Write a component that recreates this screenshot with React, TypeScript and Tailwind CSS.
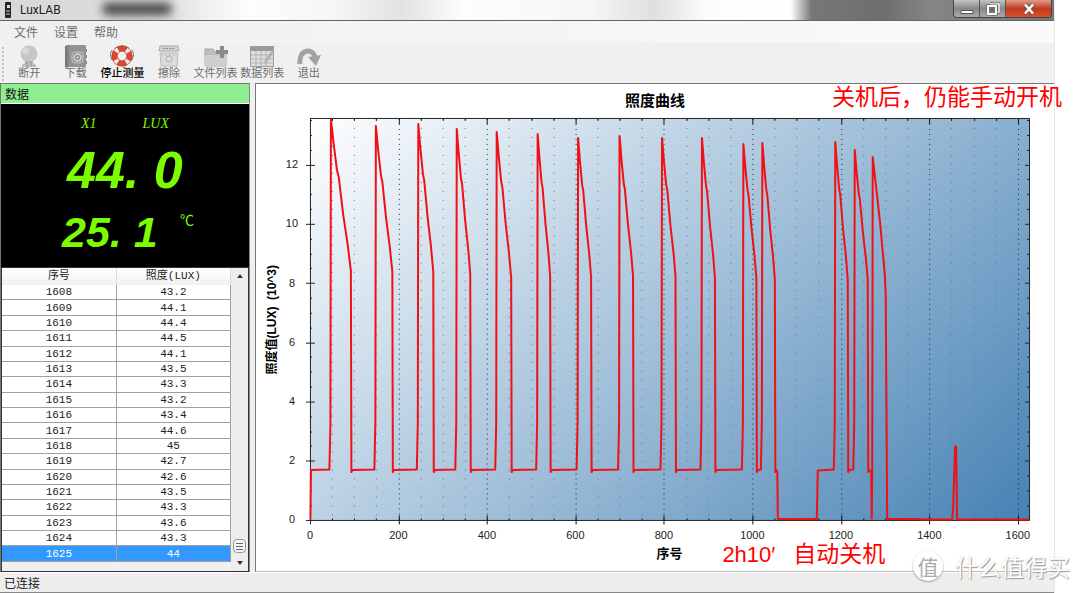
import type { ReactNode } from "react";

type Reading = { index: number; lux: string };

type ToolItem = { label: string; icon: ReactNode; active?: boolean };

// rise x, peak y, fall x, shoulder y
type Pulse = [number, number, number, number];

const MENUS = ["文件", "设置", "帮助"];

const LUX_VALUES = [
  "43.2", "44.1", "44.4", "44.5", "44.1", "43.5", "43.3", "43.2", "43.4",
  "44.6", "45", "42.7", "42.6", "43.5", "43.3", "43.6", "43.3", "44",
];

const READINGS: Reading[] = LUX_VALUES.map((lux, i) => ({ index: 1608 + i, lux }));

const SELECTED_INDEX = 1625;

const PLOT = { left: 54, right: 774, top: 35, bottom: 437 };
const X_STEP = 22.15;
const Y_STEP = 14.83;
const BASELINE = 386.5;

const FIRST_RUN: Pulse[] = [
  [75, 35, 95.5, 187],
  [120, 42, 137, 188],
  [162.5, 40, 178, 188],
  [201, 45, 215, 190],
  [241, 48, 256, 194],
  [282, 50, 295, 192],
  [322.5, 54, 336, 193],
  [364, 52, 378, 192],
  [406.5, 54, 420.5, 192],
  [446.5, 54, 460, 194],
  [488, 60, 501.5, 194],
  [507, 59, 520, 196],
];

const SECOND_RUN: Pulse[] = [
  [580, 58, 593, 196],
  [599.5, 66, 613, 196],
];

function pulsePath([rise, peak, fall, shoulder]: Pulse) {
  const w = fall - rise;
  const h = shoulder - peak;
  return [
    `L${rise - 1.5} ${BASELINE - 0.5}`,
    `L${rise - 0.5} 340`,
    `L${rise} ${peak}`,
    `L${rise + w * 0.14} ${peak + h * 0.17}`,
    `L${rise + w * 0.3} ${peak + h * 0.34}`,
    `L${rise + w * 0.38} ${peak + h * 0.38}`,
    `L${rise + w * 0.6} ${peak + h * 0.63}`,
    `L${rise + w * 0.82} ${peak + h * 0.83}`,
    `L${fall - 0.5} ${shoulder}`,
    `L${fall} ${BASELINE + 2}`,
    `L${fall + 1} ${BASELINE}`,
  ].join(" ");
}

const CURVE = [
  "M54.5 436",
  `L55 ${BASELINE}`,
  ...FIRST_RUN.map(pulsePath),
  "L522 388 L522.5 435.5 H561.5 L562.5 387",
  ...SECOND_RUN.map(pulsePath),
  "L616 388 L616.5 435 L617 386 L617.5 73 L620 95 L625 140 L629.5 190 L630.5 210 L632 435.5",
  "H660 L670 436 H697 L698 425 L700 363 L701 363 L702 436 H774",
].join(" ");

const TOOLS: ToolItem[] = [
  {
    label: "断开",
    icon: (
      <svg viewBox="0 0 24 24" className="h-6 w-6">
        <circle cx="12" cy="9" r="8.5" fill="#c6c6c6" />
        <circle cx="9" cy="6" r="3.5" fill="#d8d8d8" />
        <path d="M8 16h8v4H8z" fill="#b4b4b4" />
        <path d="M5 20c2-3 12-3 14 0v2H5z" fill="#bdbdbd" />
        <path d="M10 17v5M14 17v5" stroke="#999" />
      </svg>
    ),
  },
  {
    label: "下载",
    icon: (
      <svg viewBox="0 0 24 24" className="h-6 w-6">
        <path d="M1 1l3-1v23l-3-1z" fill="#777" />
        <rect x="3" y="0" width="19" height="22" rx="1" fill="#939393" />
        <path d="M4 0v22" stroke="#777" />
        <path d="M22 4h1v3h-1zM22 10h1v3h-1zM22 16h1v3h-1z" fill="#888" />
        <rect x="8" y="7" width="11" height="11" rx="3" fill="none" stroke="#c6c6c6" />
        <circle cx="13.500" cy="12.500" r="3.500" fill="none" stroke="#d4d4d4" strokeWidth="1.500" />
        <circle cx="13.500" cy="12.500" r="1" fill="#ddd" />
      </svg>
    ),
  },
  {
    label: "停止测量",
    active: true,
    icon: (
      <svg viewBox="0 0 24 24" className="h-6 w-6">
        <path d="M5 3Q12-1 19 3M2 5L0 9l2 6M22 5l2 4-2 6" fill="none" stroke="#777" />
        <circle cx="12" cy="11" r="7.500" fill="none" stroke="#e2452a" strokeWidth="5.500" />
        <circle
          cx="12"
          cy="11"
          r="7.500"
          fill="none"
          stroke="#e8edf3"
          strokeWidth="5.500"
          strokeDasharray="3.400 8.380"
          strokeDashoffset="-4.200"
        />
        <circle cx="12" cy="11" r="10.200" fill="none" stroke="#a9341f" strokeWidth="0.600" />
        <circle cx="12" cy="11" r="4.800" fill="none" stroke="#a9341f" strokeWidth="0.600" />
      </svg>
    ),
  },
  {
    label: "擦除",
    icon: (
      <svg viewBox="0 0 24 24" className="h-6 w-6">
        <path d="M3 1h18l1 5H2z" fill="#d3d3d3" stroke="#aaa" />
        <path d="M6 3.500h12" stroke="#888" strokeDasharray="2 1" />
        <path d="M3 8h18l-1 13H4z" fill="#dcdcdc" stroke="#bcbcbc" />
        <circle cx="12" cy="14" r="3" fill="none" stroke="#b0b0b0" />
        <path d="M4 10h16" stroke="#b9b9b9" strokeDasharray="2 2" />
      </svg>
    ),
  },
  {
    label: "文件列表",
    icon: (
      <svg viewBox="0 0 24 24" className="h-6 w-6">
        <path d="M1 4h8l2 3h11v14H1z" fill="#bdbdbd" stroke="#a6a6a6" />
        <path d="M1 10h21v11H1z" fill="#cfcfcf" />
        <path d="M16 1h4v4h4v4h-4v4h-4V9h-4V5h4z" fill="#8c8c8c" />
      </svg>
    ),
  },
  {
    label: "数据列表",
    icon: (
      <svg viewBox="0 0 24 24" className="h-6 w-6">
        <rect x="0.500" y="1.500" width="23" height="20" fill="#dedede" stroke="#9e9e9e" />
        <path d="M0 1h24v5H0z" fill="#9a9a9a" />
        <path d="M1 10h22M1 14h22M1 18h22M6 6v15M11 6v15M16 6v15" stroke="#b5b5b5" />
        <path d="M22 5l-7 10-1 4 4-3 5-8z" fill="#b0b0b0" />
      </svg>
    ),
  },
  {
    label: "退出",
    icon: (
      <svg viewBox="0 0 24 24" className="h-6 w-6">
        <path d="M3 19C1 4 17 2 18 13" fill="none" stroke="#a2a2a2" strokeWidth="5" />
        <path d="M11 12l13-2-5 11z" fill="#a2a2a2" />
      </svg>
    ),
  },
];

function TitleBar() {
  return (
    <header className="relative flex h-[21px] items-center overflow-hidden border-b border-[#666] bg-[linear-gradient(90deg,#d8d8d8_0%,#dedede_16%,#eeeeee_19%,#fdfdfd_24%,#f5f5f5_32%,#e2e2e2_38%,#fdfdfd_44%,#f6f6f6_56%,#dfdfdf_62%,#fcfcfc_67%,#ffffff_75%,#777777_77%,#6e6e6e_84%,#858585_88%,#777777_100%)]">
      <div className="absolute top-[3px] left-[102px] h-3 w-[70px] rounded-full bg-[#444] blur-[5px]" />
      <svg viewBox="0 0 8 16" className="relative ml-1 h-4 w-2">
        <rect x="1" width="6" height="16" rx="1" fill="#222" />
        <rect x="3" y="3" width="3" height="3" fill="#ddd" />
        <path d="M2 9h4M2 12h4" stroke="#ccc" />
      </svg>
      <h1 className="relative ml-2 grow font-[Roboto,sans-serif] text-[12px] leading-5 text-[#222]">
        LuxLAB
      </h1>
      <div className="mr-0.5 flex h-[18px] self-start overflow-hidden rounded-b border border-t-0 border-[#444]">
        <button
          type="button"
          aria-label="最小化"
          className="flex w-[26px] items-center justify-center border-r border-[#555] bg-linear-to-b from-[#c5c5c5] via-[#888] to-[#aaa]"
        >
          <svg viewBox="0 0 14 4" className="mt-1.5 h-1 w-3.5">
            <path d="M1 .5h12v3H1z" fill="#fff" stroke="#555" />
          </svg>
        </button>
        <button
          type="button"
          aria-label="还原"
          className="flex w-[26px] items-center justify-center border-r border-[#555] bg-linear-to-b from-[#c5c5c5] via-[#888] to-[#aaa]"
        >
          <svg viewBox="0 0 14 14" className="h-3.5 w-3.5" fill="none">
            <path d="M4 2h9v8h-3" stroke="#555" strokeWidth="3" />
            <path d="M4 2h9v8h-3" stroke="#fff" strokeWidth="1.500" />
            <rect x="2" y="4" width="8" height="8" stroke="#555" strokeWidth="3" />
            <rect x="2" y="4" width="8" height="8" stroke="#fff" strokeWidth="2" />
            <rect x="5" y="7" width="2" height="2" stroke="#555" />
          </svg>
        </button>
        <button
          type="button"
          aria-label="关闭"
          className="flex w-[45px] items-center justify-center bg-linear-to-b from-[#dd9a8a] via-[#c03a1c] to-[#d9512c]"
        >
          <svg viewBox="0 0 12 12" className="h-3 w-3" fill="none">
            <path d="M2 1.500l8 9M10 1.500l-8 9" stroke="#555" strokeWidth="4" />
            <path d="M2 1.500l8 9M10 1.500l-8 9" stroke="#fff" strokeWidth="2.500" />
          </svg>
        </button>
      </div>
    </header>
  );
}

function Toolbar() {
  return (
    <div className="flex h-10 bg-[#f0f0f0] pl-0.5">
      <div className="mt-1 mb-0.5 w-1 border-l-2 border-dotted border-[#c4c4c4]" />
      <div className="flex w-[326px]">
        {TOOLS.map((tool) => (
          <button
            key={tool.label}
            type="button"
            className={`flex w-0 flex-1 flex-col items-center pt-0.5 text-[11px] leading-3 whitespace-nowrap ${
              tool.active ? "font-medium text-black" : "text-[#6d6d6d]"
            }`}
          >
            {tool.icon}
            <span className="-mt-[3px]">{tool.label}</span>
          </button>
        ))}
      </div>
    </div>
  );
}

function Readout() {
  return (
    <div className="h-[163px] bg-black pt-3 font-['Liberation_Sans','Noto_Sans_CJK_SC',sans-serif] text-[#7cfc00]">
      <div className="flex gap-[46px] pl-20 font-['Liberation_Serif',serif] text-[14px] leading-4 italic">
        <span>X1</span>
        <span>LUX</span>
      </div>
      <div className="pt-2 pl-[66px] text-[52px] leading-[60px] font-bold whitespace-pre italic">
        44. 0
      </div>
      <div className="flex pt-1 pl-[61px]">
        <span className="w-[118px] text-[43px] leading-[56px] font-bold whitespace-pre italic">
          25. 1
        </span>
        <span className="pt-2 text-[14px] leading-4">℃</span>
      </div>
    </div>
  );
}

function ReadingsTable() {
  return (
    <div className="flex h-[305px] border border-[#333] bg-[#f0f0f0]">
      <div className="grow">
        <table className="h-[294px] w-full table-fixed border-collapse text-center font-['Liberation_Mono','Noto_Sans_CJK_SC',monospace] text-[11px] leading-[13px] text-[#222]">
          <thead>
            <tr className="h-[17px] bg-linear-to-b from-white to-[#f0f1f3]">
              <th className="border-r border-[#dcdcdc] p-0 font-normal">序号</th>
              <th className="border-r border-[#dcdcdc] p-0 font-normal">照度(LUX)</th>
            </tr>
          </thead>
          <tbody>
            {READINGS.map((reading) => (
              <tr
                key={reading.index}
                className={reading.index === SELECTED_INDEX ? "bg-[#3399ff] text-white" : "bg-white"}
              >
                <td className="border-r border-b border-[#a0a0a0] p-0 pt-px">{reading.index}</td>
                <td className="border-r border-b border-[#a0a0a0] p-0 pt-px">{reading.lux}</td>
              </tr>
            ))}
          </tbody>
        </table>
      </div>
      <div className="flex w-[17px] shrink-0 flex-col items-center justify-between bg-[#ededed] py-1.5">
        <svg viewBox="0 0 6 4" className="h-1 w-1.5">
          <path d="M0 4l3-4 3 4z" fill="#333" />
        </svg>
        <div className="mt-auto mb-2 flex h-3.5 w-[13px] flex-col items-center justify-center gap-0.5 rounded-sm border border-[#999] bg-[#f6f6f6]">
          <span className="h-px w-[7px] bg-[#666]" />
          <span className="h-px w-[7px] bg-[#666]" />
          <span className="h-px w-[7px] bg-[#666]" />
        </div>
        <svg viewBox="0 0 6 4" className="h-1 w-1.5">
          <path d="M0 0l3 4 3-4z" fill="#333" />
        </svg>
      </div>
    </div>
  );
}

function LuxChart() {
  const verticals = Array.from({ length: 32 }, (_, i) => i + 1);
  const horizontals = Array.from({ length: 27 }, (_, i) => i + 1);

  return (
    <svg viewBox="0 0 799 488" className="block w-full font-['Liberation_Sans','Noto_Sans_CJK_SC',sans-serif]">
      <defs>
        <linearGradient
          id="plotFill"
          gradientUnits="userSpaceOnUse"
          x1="134"
          y1="-45"
          x2="694"
          y2="516"
        >
          <stop offset="0" stopColor="#ffffff" />
          <stop offset="1" stopColor="#4682b4" />
        </linearGradient>
      </defs>

      <text x="399.500" y="22" textAnchor="middle" fontSize="15" fontWeight="700">
        照度曲线
      </text>

      <rect x={PLOT.left} y={PLOT.top} width="720" height="402" fill="url(#plotFill)" />

      {verticals.map((n) => {
        const x = Math.round(PLOT.left + n * X_STEP) + 0.5;
        const major = n % 4 === 0;
        return (
          <g key={n} stroke="#111">
            <path
              d={`M${x} ${PLOT.top}V${PLOT.bottom}`}
              strokeDasharray={major ? "1 4" : "1 8"}
              stroke={major ? "#1c2733" : "#5c7488"}
            />
            <path
              d={
                major
                  ? `M${x} 432V441M${x} ${PLOT.top}V40`
                  : `M${x} 435V437M${x} ${PLOT.top}V37`
              }
            />
          </g>
        );
      })}
      {horizontals.map((n) => {
        const y = Math.round(436.5 - n * Y_STEP) + 0.5;
        return (
          <path
            key={n}
            stroke="#222"
            d={n % 4 === 0 ? `M50 ${y}H59M770 ${y}H774` : `M54 ${y}H56M772 ${y}H774`}
          />
        );
      })}

      <path d="M54.500 35V441M50 437H774.500V34.500H54" fill="none" stroke="#222" />
      <path d={CURVE} fill="none" stroke="#f01016" strokeWidth="2" strokeLinejoin="round" />

      <g fontSize="11" fill="#222" textAnchor="middle">
        {[0, 200, 400, 600, 800, 1000, 1200, 1400, 1600].map((value) => (
          <text key={value} x={PLOT.left + value * 0.443} y="456">
            {value}
          </text>
        ))}
        {[0, 2, 4, 6, 8, 10, 12].map((value) => (
          <text key={value} x="36" y={440 - value * 29.65}>
            {value}
          </text>
        ))}
      </g>

      <text x="414" y="475" textAnchor="middle" fontSize="13" fontWeight="700">
        序号
      </text>
      <text
        transform="translate(20 236) rotate(-90)"
        textAnchor="middle"
        fontSize="12"
        fontWeight="700"
        xmlSpace="preserve"
      >
        照度值(LUX)  (10^3)
      </text>
      <text x="467" y="479" fontSize="22" fill="#ff0000">
        2h10′
      </text>
      <text x="538" y="479" fontSize="23" fill="#ff0000">
        自动关机
      </text>
    </svg>
  );
}

function Watermark() {
  return (
    <div className="absolute right-2.5 bottom-3 flex items-center gap-3 text-white">
      <span className="flex h-[30px] w-[30px] items-center justify-center rounded-full bg-white text-[21px] leading-[30px] text-[#aaa] shadow-[0_1px_2px_#999]">
        值
      </span>
      <span className="text-[23px] leading-[30px] [text-shadow:1px_1px_1px_#999,0_0_2px_#ccc]">
        什么值得买
      </span>
    </div>
  );
}

export default function App() {
  return (
    <div className="relative bg-white pr-[25px] font-['Noto_Sans_CJK_SC',sans-serif]">
      <div className="border-r border-[#e8e8e8] bg-[#f0f0f0]">
        <TitleBar />
        <nav className="flex h-[22px] gap-4 bg-linear-to-r from-[#f0f0f0] to-[#fafafa] pl-3.5 text-[12px] leading-[22px] text-[#6d6d6d]">
          {MENUS.map((menu) => (
            <button key={menu} type="button">
              {menu}
            </button>
          ))}
        </nav>
        <Toolbar />
        <main className="flex gap-[5px]">
          <section className="w-[250px] shrink-0 border border-t-[#777] border-r-[#888] border-b-0 border-l-[#777]">
            <h2 className="h-5 border-b border-white bg-[#90ee90] pl-1 text-[12px] leading-[19px] text-[#111]">
              数据
            </h2>
            <Readout />
            <ReadingsTable />
          </section>
          <section className="min-w-0 grow self-start border-t border-b border-l border-[#777] border-b-[#bbb] bg-white">
            <LuxChart />
          </section>
        </main>
        <footer className="h-[21px] border-t border-b border-t-white border-b-[#888] bg-[#f0eeed] pl-1 text-[12px] leading-5 text-[#222]">
          已连接
        </footer>
      </div>
      <p className="absolute top-[82px] right-[18px] text-[23px] leading-[26px] text-[#ff0000]">
        关机后，仍能手动开机
      </p>
      <Watermark />
    </div>
  );
}
